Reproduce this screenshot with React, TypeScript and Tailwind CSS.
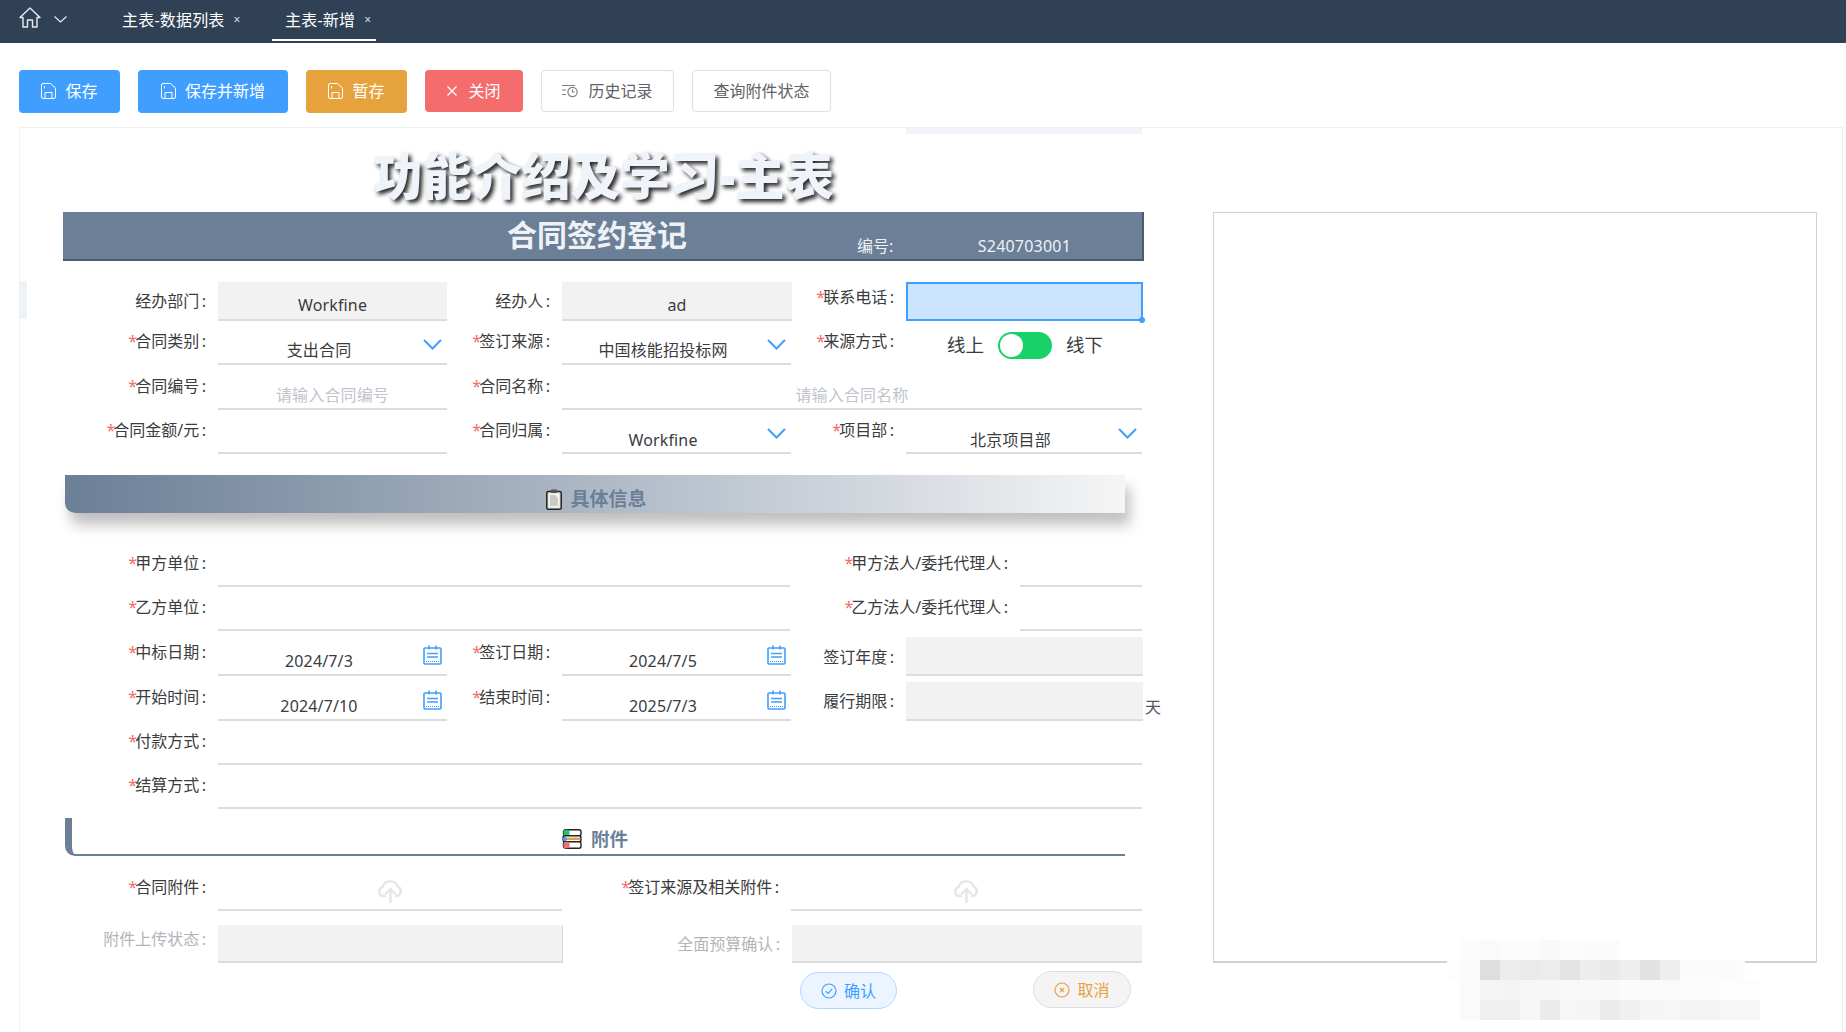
import React from "react";

const FONT = "font-['Noto_Sans','Noto_Sans_CJK_SC',sans-serif]";

function SaveIcon() {
  return (
    <svg width="15" height="16" viewBox="0 0 15 16" fill="none" stroke="#fff" strokeWidth="1" strokeLinejoin="round">
      <path d="M2 .5h7.5l5 4.5v9a1.5 1.5 0 0 1-1.5 1.5H2A1.5 1.5 0 0 1 .5 14V2A1.5 1.5 0 0 1 2 .5z" />
      <path d="M4 15.5V9.5h7v6" />
      <path d="M3.5 3v2.5" />
    </svg>
  );
}

function HistoryIcon() {
  return (
    <svg width="16" height="14" viewBox="0 0 16 14" fill="none" stroke="#7d8289" strokeWidth="1.2">
      <path d="M0 1.5h13M0 6h4M0 10.5h4" />
      <circle cx="10.5" cy="8" r="4.6" />
      <path d="M10.5 5.5V8h2.2" />
    </svg>
  );
}

function Chevron() {
  return (
    <svg width="19" height="11" viewBox="0 0 19 11" fill="none" stroke="#409eff" strokeWidth="2">
      <path d="M1 1l8.5 8.5L18 1" />
    </svg>
  );
}

function Calendar() {
  return (
    <svg width="19" height="20" viewBox="0 0 19 20" fill="none" stroke="#409eff" strokeWidth="1.6">
      <rect x="1" y="3" width="17" height="16" rx="1" />
      <path d="M6 .5v4M13 .5v4M4 8.5h11M4 12h11" />
      <path d="M3 16.5h13" strokeDasharray="1 1" strokeWidth="1.2" />
    </svg>
  );
}

function ClipboardIcon() {
  return (
    <svg width="16" height="21" viewBox="0 0 16 21">
      <rect x=".8" y="2.5" width="14.4" height="17.7" rx="1.5" fill="#e9e3d2" stroke="#222" strokeWidth="1.5" />
      <rect x="3" y="5" width="10" height="13" fill="#f7f7f7" />
      <path d="M4 6h5l3 3v8H4z" fill="#c9c9c9" />
      <rect x="5" y=".5" width="6" height="3.5" rx=".8" fill="#555" />
    </svg>
  );
}

function BooksIcon() {
  return (
    <svg width="20" height="20" viewBox="0 0 20 20">
      <rect x="1.5" y=".8" width="17.5" height="6" rx="2" fill="#fff" stroke="#222" strokeWidth="1.4" />
      <rect x="1.5" y=".8" width="6" height="6" rx="2" fill="#1fc36b" />
      <rect x="1" y="6.8" width="18" height="6" rx="2" fill="#fff" stroke="#222" strokeWidth="1.4" />
      <path d="M3 9.8h15" stroke="#e6a23c" strokeWidth="2.4" />
      <rect x=".8" y="8" width="4" height="4" rx="1.5" fill="#409eff" />
      <rect x="1.5" y="12.8" width="17.5" height="6.4" rx="2" fill="#fff" stroke="#222" strokeWidth="1.4" />
      <rect x="1.5" y="12.8" width="6" height="6.4" rx="2" fill="#f56c6c" />
    </svg>
  );
}

function UploadIcon() {
  return (
    <svg width="25" height="25" viewBox="0 0 25 25" fill="none" stroke="#e6e6e6" strokeWidth="2.4" strokeLinecap="round" strokeLinejoin="round">
      <path d="M7 18H5.5a4.5 4.5 0 0 1-.8-8.9A7.8 7.8 0 0 1 19.6 8.6a4.9 4.9 0 0 1-.6 9.4h-1" />
      <path d="M12.5 24V11M8 15.5l4.5-4.5 4.5 4.5" />
    </svg>
  );
}

function Label({
  w,
  pb,
  req,
  gray,
  children,
}: {
  w: string;
  pb: string;
  req?: boolean;
  gray?: boolean;
  children: React.ReactNode;
}) {
  return (
    <div
      className={`${w} ${pb} ${gray ? "text-[#b1b5ba]" : "text-[#3a3c40]"} flex shrink-0 items-end justify-end whitespace-nowrap pr-[12px] text-[16px] leading-[24px]`}
    >
      {req && <span className="-mr-[2px] text-[#f56c6c]">*</span>}
      {children}
      <span className="ml-[2.5px]">:</span>
    </div>
  );
}

function Input({
  w,
  children,
  gray,
  placeholder,
  pb,
  arrow,
  calendar,
  className,
}: {
  w: string;
  children?: React.ReactNode;
  gray?: boolean;
  placeholder?: string;
  pb?: string;
  arrow?: string;
  calendar?: boolean;
  className?: string;
}) {
  return (
    <div
      className={`${w} ${gray ? "bg-[#f2f2f2]" : ""} ${arrow || calendar ? "pr-[27px]" : ""} ${pb ?? ""} ${className ?? ""} relative flex shrink-0 items-end justify-center border-b-2 border-[#dcdcdc] text-[16px] leading-[24px] tracking-[0.15px] text-[#3a3c40]`}
    >
      {placeholder ? <span className="pb-[1px] text-[#c0c4cc]">{placeholder}</span> : children}
      {arrow && (
        <span className={`${arrow} absolute flex`}>
          <Chevron />
        </span>
      )}
      {calendar && (
        <span className="absolute right-[5px] bottom-[9px] flex">
          <Calendar />
        </span>
      )}
    </div>
  );
}

function Upload({ w }: { w: string }) {
  return (
    <div className={`${w} flex shrink-0 items-end justify-center border-b-2 border-[#dcdcdc] pb-[6px]`}>
      <UploadIcon />
    </div>
  );
}

const toolbarBase = "flex items-center justify-center rounded-[4px] text-[16px] text-white";

const mosaic: { x: string; cells: string[] }[] = [
  { x: "ml-[20px]", cells: ["#fcfcfc", "#fafafa", "#fcfcfc", "#fcfcfc", "#f9f9f9", "#fcfcfc", "#fbfbfb", "#fbfbfb"] },
  {
    x: "ml-[7px]",
    cells: ["#fdfdfd", "#fbfbfb", "#dedede", "#ededed", "#eaeaea", "#ececec", "#e3e3e3", "#ededed", "#e9e9e9", "#eeeeee", "#e2e2e2", "#eeeeee", "#fbfbfb", "#fbfbfb", "#fbfbfb", "#fcfcfc"],
  },
  {
    x: "ml-[20px]",
    cells: ["#fafafa", "#f5f5f5", "#f4f4f4", "#f7f7f7", "#f7f7f7", "#f8f8f8", "#f9f9f9", "#f9f9f9", "#fbfbfb", "#fbfbfb", "#fafafa", "#fcfcfc", "#fcfcfc", "#fdfdfd", "#fdfdfd"],
  },
  {
    x: "ml-[20px]",
    cells: ["#fafafa", "#efefef", "#efefef", "#f7f7f7", "#ebebeb", "#f6f6f6", "#f5f5f5", "#ebebeb", "#f0f0f0", "#f5f5f5", "#f6f6f6", "#f3f3f3", "#f3f3f3", "#f6f6f6", "#f7f7f7"],
  },
];

export default function App() {
  return (
    <div className={`${FONT} relative flex h-[1032px] w-[1846px] flex-col overflow-hidden bg-white`}>
      {/* top bar */}
      <div className="flex h-[43px] shrink-0 items-start bg-[#304156] pl-[19px] text-white">
        <svg className="mt-[7px]" width="22" height="21" viewBox="0 0 22 21" fill="none" stroke="#e8ebef" strokeWidth="1.4" strokeLinejoin="round">
          <path d="M1 10.5L11 1l10 9.5h-3V20h-4.5v-7h-5v7H4v-9.5z" />
        </svg>
        <svg className="mt-[16px] ml-[13px]" width="13" height="7" viewBox="0 0 13 7" fill="none" stroke="#e8ebef" strokeWidth="1.2">
          <path d="M.5.5l6 5.5 6-5.5" />
        </svg>
        <div className="ml-[47px] flex h-[41px] w-[134px] items-center gap-[9px] pb-[2px] pl-[8px] text-[16px] tracking-[0.2px]">
          <span>主表-数据列表</span>
          <span className="text-[12px] text-[#d8dce2]">×</span>
        </div>
        <div className="ml-[24px] flex h-[41px] w-[104px] items-center gap-[9px] border-b-2 border-white pl-[13px] text-[16px] tracking-[0.2px]">
          <span>主表-新增</span>
          <span className="text-[12px] text-[#d8dce2]">×</span>
        </div>
      </div>

      {/* toolbar */}
      <div className="flex h-[84px] shrink-0 items-start gap-[18px] pt-[27px] pl-[19px]">
        <button className={`${toolbarBase} h-[43px] w-[101px] gap-[9px] bg-[#409eff] pb-[1px]`}>
          <SaveIcon />
          保存
        </button>
        <button className={`${toolbarBase} h-[43px] w-[150px] gap-[9px] bg-[#409eff] pb-[1px]`}>
          <SaveIcon />
          保存并新增
        </button>
        <button className={`${toolbarBase} h-[43px] w-[101px] gap-[9px] bg-[#e6a23c] pb-[1px]`}>
          <SaveIcon />
          暂存
        </button>
        <button className={`${toolbarBase} h-[42px] w-[98px] gap-[11px] bg-[#f56c6c]`}>
          <svg width="10" height="10" viewBox="0 0 10 10" stroke="#fff" strokeWidth="1.3">
            <path d="M.5.5l9 9M9.5.5l-9 9" />
          </svg>
          关闭
        </button>
        <button className={`${toolbarBase} h-[42px] w-[133px] gap-[10px] border border-[#dcdfe6] bg-white !text-[#606266]`}>
          <HistoryIcon />
          历史记录
        </button>
        <button className={`${toolbarBase} h-[42px] w-[139px] border border-[#dcdfe6] bg-white !text-[#606266]`}>
          查询附件状态
        </button>
      </div>

      {/* panel */}
      <div className="relative mr-[3px] ml-[19px] flex flex-1 border-x border-t border-[#f0f0f0]">
        <span className="absolute top-[153px] left-0 h-[38px] w-[7px] bg-[#eef3f8]" />
        <span className="absolute top-0 left-[886px] h-[6px] w-[236px] bg-[#f0f4f8]" />

        <div className="ml-[43px] w-[1081px] shrink-0">
          {/* title */}
          <div className="flex h-[84px] justify-center pt-[23px]">
            <h1 className="text-[49.5px] leading-[50px] font-black whitespace-nowrap text-[#eef4fa] [text-shadow:3px_3px_4px_rgba(0,0,0,0.85)]">
              功能介绍及学习-主表
            </h1>
          </div>

          {/* blue header */}
          <div className="flex h-[49px] border-r-2 border-b-2 border-r-[#4c5a6b] border-b-[#4c5a6b] bg-[#6b7f97] text-[#eef2f6]">
            <div className="mt-[7px] ml-[444px] w-[180px] text-[30px] leading-[32px] font-bold whitespace-nowrap">合同签约登记</div>
            <div className="ml-[170px] w-[50px] self-end pb-[1px] text-[16px] leading-[24px]">编号:</div>
            <div className="w-[236px] self-end pb-[1px] text-center text-[16px] leading-[24px] tracking-[0.2px]">S240703001</div>
          </div>

          {/* basic rows */}
          <div className="mt-[21px] flex h-[39px]">
            <Label w="w-[155px]" pb="pb-[8px]">经办部门</Label>
            <Input w="w-[229px]" gray pb="pb-[2px]">Workfine</Input>
            <Label w="w-[115px]" pb="pb-[8px]">经办人</Label>
            <Input w="w-[230px]" gray pb="pb-[2px]">ad</Input>
            <Label w="w-[114px]" pb="pb-[12px]" req>联系电话</Label>
            <div className="relative w-[237px] shrink-0 border-2 border-[#409eff] bg-[#cce5ff]">
              <span className="absolute -right-[4px] -bottom-[4px] h-[6px] w-[6px] rounded-full bg-[#409eff]" />
            </div>
          </div>
          <div className="flex h-[44px]">
            <Label w="w-[155px]" pb="pb-[12px]" req>合同类别</Label>
            <Input w="w-[229px]" pb="pb-[1px]" arrow="right-[5px] bottom-[13px]">支出合同</Input>
            <Label w="w-[115px]" pb="pb-[12px]" req>签订来源</Label>
            <Input w="w-[229px]" pb="pb-[1px]" arrow="right-[5px] bottom-[13px]">中国核能招投标网</Input>
            <Label w="w-[115px]" pb="pb-[12px]" req>来源方式</Label>
            <div className="flex w-[236px] shrink-0 items-center gap-[14px] pt-[4px] pl-[41px] text-[18.5px] text-[#3a3c40]">
              <span>线上</span>
              <span className="flex h-[27px] w-[54px] items-center rounded-full bg-[#19d169] pl-[2px]">
                <span className="h-[23px] w-[23px] rounded-full bg-white" />
              </span>
              <span>线下</span>
            </div>
          </div>
          <div className="flex h-[45px]">
            <Label w="w-[155px]" pb="pb-[12px]" req>合同编号</Label>
            <Input w="w-[229px]" placeholder="请输入合同编号" />
            <Label w="w-[115px]" pb="pb-[12px]" req>合同名称</Label>
            <Input w="w-[580px]" placeholder="请输入合同名称" />
          </div>
          <div className="flex h-[44px]">
            <Label w="w-[155px]" pb="pb-[12px]" req>合同金额/元</Label>
            <Input w="w-[229px]" />
            <Label w="w-[115px]" pb="pb-[12px]" req>合同归属</Label>
            <Input w="w-[229px]" arrow="right-[5px] bottom-[13px]">Workfine</Input>
            <Label w="w-[115px]" pb="pb-[12px]" req>项目部</Label>
            <Input w="w-[236px]" arrow="right-[5px] bottom-[13px]">北京项目部</Input>
          </div>

          {/* section: details */}
          <div className="mt-[21px] ml-[2px] flex h-[38px] w-[1060px] items-center justify-center gap-[8px] rounded-bl-[10px] bg-linear-to-r from-[#6b7f97] to-[#f5f5f5] pt-[10px] pl-[3px] shadow-[5px_12px_14px_rgba(0,0,0,0.25)]">
            <ClipboardIcon />
            <span className="text-[19px] leading-[24px] font-bold text-[#6b7f97]">具体信息</span>
          </div>

          {/* detail rows */}
          <div className="mt-[30px] flex h-[44px]">
            <Label w="w-[155px]" pb="pb-[12px]" req>甲方单位</Label>
            <Input w="w-[572px]" />
            <Label w="w-[230px]" pb="pb-[12px]" req>甲方法人/委托代理人</Label>
            <Input w="w-[122px]" />
          </div>
          <div className="flex h-[44px]">
            <Label w="w-[155px]" pb="pb-[12px]" req>乙方单位</Label>
            <Input w="w-[572px]" />
            <Label w="w-[230px]" pb="pb-[12px]" req>乙方法人/委托代理人</Label>
            <Input w="w-[122px]" />
          </div>
          <div className="flex h-[45px]">
            <Label w="w-[155px]" pb="pb-[12px]" req>中标日期</Label>
            <Input w="w-[229px]" calendar pb="pb-[1px]">2024/7/3</Input>
            <Label w="w-[115px]" pb="pb-[12px]" req>签订日期</Label>
            <Input w="w-[229px]" calendar pb="pb-[1px]">2024/7/5</Input>
            <Label w="w-[115px]" pb="pb-[7px]">签订年度</Label>
            <Input w="w-[237px]" gray className="mt-[6px]" />
          </div>
          <div className="flex h-[45px]">
            <Label w="w-[155px]" pb="pb-[12px]" req>开始时间</Label>
            <Input w="w-[229px]" calendar pb="pb-[1px]">2024/7/10</Input>
            <Label w="w-[115px]" pb="pb-[12px]" req>结束时间</Label>
            <Input w="w-[229px]" calendar pb="pb-[1px]">2025/7/3</Input>
            <Label w="w-[115px]" pb="pb-[8px]">履行期限</Label>
            <Input w="w-[237px]" gray className="mt-[6px]" />
            <span className="ml-[2px] shrink-0 self-end pb-[2px] text-[16px] leading-[24px] text-[#55585c]">天</span>
          </div>
          <div className="flex h-[44px]">
            <Label w="w-[155px]" pb="pb-[12px]" req>付款方式</Label>
            <Input w="w-[924px]" />
          </div>
          <div className="flex h-[44px]">
            <Label w="w-[155px]" pb="pb-[12px]" req>结算方式</Label>
            <Input w="w-[924px]" />
          </div>

          {/* section: attachments */}
          <div className="mt-[9px] ml-[2px] flex h-[38px] w-[1060px] items-center justify-center gap-[9px] rounded-bl-[10px] border-b-2 border-l-[7px] border-[#6b7f97] pt-[6px] pr-[7px]">
            <BooksIcon />
            <span className="text-[18.5px] leading-[24px] font-bold text-[#6b7f97]">附件</span>
          </div>

          <div className="flex h-[55px]">
            <Label w="w-[155px]" pb="pb-[12px]" req>合同附件</Label>
            <Upload w="w-[344px]" />
            <Label w="w-[229px]" pb="pb-[12px]" req>签订来源及相关附件</Label>
            <Upload w="w-[351px]" />
          </div>
          <div className="mt-[14px] flex h-[38px]">
            <Label w="w-[155px]" pb="pb-[12px]" gray>附件上传状态</Label>
            <Input w="w-[345px]" gray className="border-r border-r-[#dcdcdc]" />
            <Label w="w-[229px]" pb="pb-[7px]" gray>全面预算确认</Label>
            <Input w="w-[350px]" gray />
          </div>

          <div className="mt-[8px] flex items-start gap-[136px] pl-[737px]">
            <button className="mt-[1px] flex h-[37px] w-[97px] shrink-0 items-center justify-center gap-[7px] rounded-full border border-[#b3d8ff] bg-[#ecf5ff] text-[16px] text-[#409eff]">
              <svg width="16" height="16" viewBox="0 0 16 16" fill="none" stroke="#409eff" strokeWidth="1.2">
                <circle cx="8" cy="8" r="7" />
                <path d="M4.8 8.2l2.3 2.2 4.2-4.6" />
              </svg>
              确认
            </button>
            <button className="flex h-[37px] w-[98px] shrink-0 items-center justify-center gap-[7px] rounded-full border border-[#dcdcdc] bg-[#f4f4f5] text-[16px] text-[#e6a23c]">
              <svg width="16" height="16" viewBox="0 0 16 16" fill="none" stroke="#e6a23c" strokeWidth="1.2">
                <circle cx="8" cy="8" r="7" />
                <path d="M6 6l4 4M10 6l-4 4" />
              </svg>
              取消
            </button>
          </div>
        </div>

        {/* preview */}
        <div className="mt-[84px] ml-[69px] h-[751px] w-[604px] shrink-0 border border-b-2 border-[#d2d2d2]" />
      </div>

      {/* pixelated mosaic over the corner */}
      <div className="absolute top-[940px] left-[1440px] flex flex-col">
        {mosaic.map((row, i) => (
          <div key={i} className={`${row.x} flex h-[20px]`}>
            {row.cells.map((c, j) => (
              <span
                key={j}
                className={`h-[20px] ${i === 1 && j === 0 ? "w-[13px]" : i === 1 && j === 15 ? "w-[5px]" : "w-[20px]"}`}
                style={{ backgroundColor: c }}
              />
            ))}
          </div>
        ))}
      </div>
    </div>
  );
}
